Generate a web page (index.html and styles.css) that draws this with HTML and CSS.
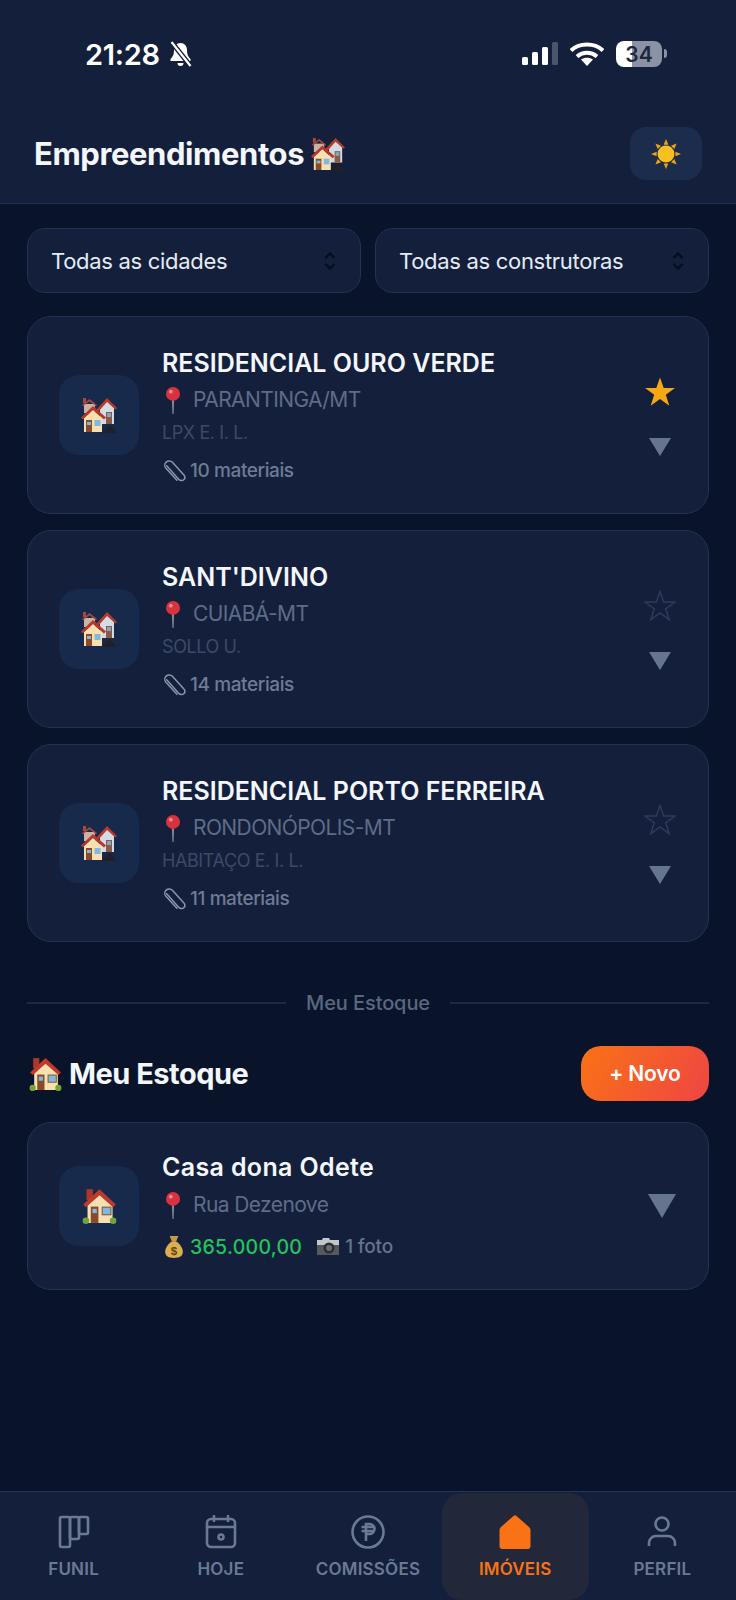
FILE: index.html
```html
<!DOCTYPE html>
<html lang="pt-BR">
<head>
    <meta charset="UTF-8">
    <title>Empreendimentos</title>
    <link rel="stylesheet" href="styles.css">
</head>
<body>
    <svg class="sprites" width="0" height="0">
        <symbol id="house" viewBox="0 0 32 34">
            <path d="M4 2h6v10H4z" fill="#a8382c"/>
            <path d="M16 6l12 11v16H5V17z" fill="#f6dfb0"/>
            <path d="M16 2l15 14-2.500 2.500L16 7.500 3.500 18.500 1 16z" fill="#c0392b"/>
            <path d="M8 18h7v15H8z" fill="#8a4a2a"/>
            <path d="M9.500 20h4v4h-4z" fill="#7fb9e0"/>
            <path d="M18 18h9v8h-9z" fill="#8b5a3c"/>
            <path d="M19 19h7v6h-7z" fill="#7fb9e0"/>
            <circle cx="3.500" cy="31" r="3" fill="#6fa53a"/>
            <circle cx="28.500" cy="31" r="3" fill="#6fa53a"/>
        </symbol>
        <symbol id="houses" viewBox="0 0 36 36">
            <path d="M3 7h11v9H3z" fill="#c9b3a8"/>
            <path d="M2 1h3v5H2z" fill="#a8483a"/>
            <path d="M1 8l7.500-6L16 8l-1 1.200-6.500-5-6.500 5z" fill="#a8483a"/>
            <path d="M19 10l7-6 7 7v16H19z" fill="#d5dbe3"/>
            <path d="M15 13 26 1l10 10-1.500 1.500L26 5 17 15z" fill="#b83a2c"/>
            <path d="M25 15h6v12h-6z" fill="#8a5a44"/>
            <path d="M26 16h4v4h-4z" fill="#7fa8c8"/>
            <path d="M20 36l9-8 7 8z" fill="#231f26"/>
            <path d="M12 13l9 8v14H3V21z" fill="#f6dfb0"/>
            <path d="M12 9l13 11.500-2 2L12 13 1.500 22.500 0 20.500z" fill="#b8362a"/>
            <path d="M5 23h6v12H5z" fill="#8a4a2a"/>
            <path d="M6 25h4v3H6z" fill="#7fb9e0"/>
            <path d="M13.500 23h6v6h-6z" fill="#7fb9e0"/>
        </symbol>
        <symbol id="pin" viewBox="0 0 20 32">
            <path d="M9 14h2l-.5 18h-1z" fill="#a9adb5"/>
            <circle cx="10" cy="9" r="8" fill="#d9323f"/>
            <circle cx="7.500" cy="6.500" r="2.200" fill="#f08a90"/>
        </symbol>
        <symbol id="clip" viewBox="0 0 24 24">
            <path d="M4.500 6.500 16 19.500c1.500 1.700 4 1.500 5 .3 1.200-1.200 1.200-3.100-.2-4.600L10 3.200C8.500 1.600 5.800 1.300 4 3c-1.800 1.700-1.700 4.200-.2 5.800l10.500 11.500" fill="none" stroke="#8b97ab" stroke-width="1.400" stroke-linecap="round"/>
        </symbol>
        <symbol id="camera" viewBox="0 0 24 19">
            <path d="M1 3h5l1-2h6l1 2h9v15H1z" fill="#55585d"/>
            <path d="M1 3h5l1-2h6l1 2h9v5H1z" fill="#c4c6c9"/>
            <circle cx="13" cy="11" r="5.500" fill="#2c2e33"/>
            <circle cx="13" cy="11" r="3" fill="#6a6e75"/>
        </symbol>
        <symbol id="star" viewBox="0 0 32 32">
            <path d="M16 1.500 19.700 12H31l-9.200 6.700 3.500 11L16 23l-9.300 6.700 3.500-11L1 12h11.300z"/>
        </symbol>
    </svg>

    <header class="topo">
        <div class="status">
            <div class="hora">
                <span>21:28</span>
                <svg class="sino" viewBox="0 0 24 26" width="25" height="26">
                    <path d="M12 2c-4 0-6.500 3-6.500 7 0 5-1.500 7-3.500 9v2h20v-2c-2-2-3.500-4-3.500-9 0-4-2.500-7-6.500-7z" fill="#fff"/>
                    <path d="M9 22a3 3 0 0 0 6 0z" fill="#fff"/>
                    <path d="M3 1l19 24" stroke="#131f3b" stroke-width="5"/>
                    <path d="M3 1l19 24" stroke="#fff" stroke-width="2.200"/>
                </svg>
            </div>
            <div class="sinais">
                <svg viewBox="0 0 36 24" width="36" height="24">
                    <rect x="0" y="15" width="6" height="8" rx="1.500" fill="#fff"/>
                    <rect x="10" y="10" width="6" height="13" rx="1.500" fill="#fff"/>
                    <rect x="20" y="5" width="6" height="18" rx="1.500" fill="#fff"/>
                    <rect x="30" y="0" width="6" height="23" rx="1.500" fill="#4a556b"/>
                </svg>
                <svg viewBox="0 0 34 24" width="34" height="24">
                    <path d="M1 8.500C9.500 .5 24.500 .5 33 8.500" fill="none" stroke="#fff" stroke-width="4"/>
                    <path d="M7 14.500c6-5 14-5 20 0" fill="none" stroke="#fff" stroke-width="4"/>
                    <path d="M17 24l-6-6.500c3.500-2.500 8.500-2.500 12 0z" fill="#fff"/>
                </svg>
                <div class="bateria"><span>34</span></div>
            </div>
        </div>
        <div class="barra">
            <h1>Empreendimentos <svg class="emoji" width="34" height="34"><use href="#houses"/></svg></h1>
            <button class="tema">
                <svg viewBox="0 0 32 32" width="30" height="30">
                    <g fill="#e8a21c">
                        <path d="M16 0l2.500 6h-5z"/><path d="M16 32l2.500-6h-5z"/><path d="M0 16l6-2.500v5z"/><path d="M32 16l-6-2.500v5z"/>
                        <path d="M4.700 4.700l6 2.400-3.600 3.600z"/><path d="M27.300 4.700l-6 2.400 3.600 3.600z"/><path d="M4.700 27.300l6-2.400-3.600-3.600z"/><path d="M27.300 27.300l-6-2.400 3.600-3.600z"/>
                    </g>
                    <circle cx="16" cy="16" r="9" fill="#fbbf24"/>
                </svg>
            </button>
        </div>
    </header>

    <main class="conteudo">
        <div class="filtros">
            <div class="filtro">
                <span>Todas as cidades</span>
                <svg viewBox="0 0 14 22" width="14" height="22"><path d="M2.500 8 7 3.500 11.500 8M2.500 14 7 18.500 11.500 14" fill="none" stroke="#070d1a" stroke-width="2.400"/></svg>
            </div>
            <div class="filtro">
                <span>Todas as construtoras</span>
                <svg viewBox="0 0 14 22" width="14" height="22"><path d="M2.500 8 7 3.500 11.500 8M2.500 14 7 18.500 11.500 14" fill="none" stroke="#070d1a" stroke-width="2.400"/></svg>
            </div>
        </div>

        <div class="lista">
            <article class="card">
                <div class="icone"><svg width="36" height="36"><use href="#houses"/></svg></div>
                <div class="info">
                    <h2>RESIDENCIAL OURO VERDE</h2>
                    <p class="local"><svg width="18" height="28"><use href="#pin"/></svg>PARANTINGA/MT</p>
                    <p class="construtora">LPX E. I. L.</p>
                    <p class="materiais"><svg width="25" height="25"><use href="#clip"/></svg>10 materiais</p>
                </div>
                <div class="acoes">
                    <svg class="estrela ativa" width="32" height="32"><use href="#star"/></svg>
                    <span class="seta"></span>
                </div>
            </article>

            <article class="card">
                <div class="icone"><svg width="36" height="36"><use href="#houses"/></svg></div>
                <div class="info">
                    <h2>SANT'DIVINO</h2>
                    <p class="local"><svg width="18" height="28"><use href="#pin"/></svg>CUIABÁ-MT</p>
                    <p class="construtora">SOLLO U.</p>
                    <p class="materiais"><svg width="25" height="25"><use href="#clip"/></svg>14 materiais</p>
                </div>
                <div class="acoes">
                    <svg class="estrela" width="32" height="32"><use href="#star"/></svg>
                    <span class="seta"></span>
                </div>
            </article>

            <article class="card">
                <div class="icone"><svg width="36" height="36"><use href="#houses"/></svg></div>
                <div class="info">
                    <h2>RESIDENCIAL PORTO FERREIRA</h2>
                    <p class="local"><svg width="18" height="28"><use href="#pin"/></svg>RONDONÓPOLIS-MT</p>
                    <p class="construtora">HABITAÇO E. I. L.</p>
                    <p class="materiais"><svg width="25" height="25"><use href="#clip"/></svg>11 materiais</p>
                </div>
                <div class="acoes">
                    <svg class="estrela" width="32" height="32"><use href="#star"/></svg>
                    <span class="seta"></span>
                </div>
            </article>
        </div>

        <div class="divisor"><span>Meu Estoque</span></div>

        <div class="estoque-topo">
            <h2><svg width="33" height="35"><use href="#house"/></svg>Meu Estoque</h2>
            <button class="novo">+ Novo</button>
        </div>

        <article class="card card-estoque">
            <div class="icone"><svg width="35" height="37"><use href="#house"/></svg></div>
            <div class="info">
                <h2>Casa dona Odete</h2>
                <p class="local"><svg width="18" height="28"><use href="#pin"/></svg>Rua Dezenove</p>
                <p class="valores">
                    <svg viewBox="0 0 20 26" width="18" height="23">
                        <path d="M5 1h10l-2.500 6h-5z" fill="#c99a3e"/>
                        <path d="M8 7h4c5 3 8 8 8 12 0 5-4 7-10 7S0 24 0 19c0-4 3-9 8-12z" fill="#dcae4e"/>
                        <text x="10" y="22.500" font-size="13" font-weight="700" text-anchor="middle" fill="#5e4413" font-family="Liberation Sans, sans-serif">$</text>
                    </svg>
                    <span class="preco">365.000,00</span>
                    <svg class="camera" width="24" height="19"><use href="#camera"/></svg><span>1 foto</span>
                </p>
            </div>
            <span class="seta seta-grande"></span>
        </article>
    </main>

    <nav class="menu">
        <a class="item">
            <svg viewBox="0 0 32 34" width="32" height="34" fill="none" stroke="currentColor" stroke-width="2.600" stroke-linejoin="round">
                <rect x="2" y="2" width="10" height="30" rx="1.500"/>
                <rect x="12" y="2" width="9" height="22" rx="1.500"/>
                <rect x="21" y="2" width="9" height="17" rx="1.500"/>
            </svg>
            <span>FUNIL</span>
        </a>
        <a class="item">
            <svg viewBox="0 0 32 34" width="32" height="34" fill="none" stroke="currentColor" stroke-width="2.600" stroke-linecap="round">
                <rect x="2" y="4" width="28" height="28" rx="4"/><path d="M2 12h28M9 1v5M23 1v5"/><circle cx="16" cy="22" r="2.500"/>
            </svg>
            <span>HOJE</span>
        </a>
        <a class="item">
            <svg viewBox="0 0 34 34" width="34" height="34" fill="none" stroke="currentColor" stroke-width="2.600">
                <circle cx="17" cy="17" r="15.500"/><path d="M15 26V9h3.500a5 5 0 0 1 0 10H15M10.500 12h13M10.500 16h13"/>
            </svg>
            <span>COMISSÕES</span>
        </a>
        <a class="item ativo">
            <svg viewBox="0 0 32 34" width="32" height="34">
                <path d="M14.500 1a2 2 0 0 1 3 0l12.500 11c1 1 1.500 2 1.500 3v16a3 3 0 0 1-3 3h-25a3 3 0 0 1-3-3V15c0-1 .5-2 1.500-3z" fill="currentColor"/>
            </svg>
            <span>IMÓVEIS</span>
        </a>
        <a class="item">
            <svg viewBox="0 0 32 34" width="32" height="34" fill="none" stroke="currentColor" stroke-width="2.600">
                <circle cx="16" cy="9" r="6.500"/><path d="M3 31v-3a7 7 0 0 1 7-7h12a7 7 0 0 1 7 7v3"/>
            </svg>
            <span>PERFIL</span>
        </a>
    </nav>
</body>
</html>
```

FILE: styles.css
```css
:root {
    --painel: #131f3b;
    --fundo: #09142a;
    --card: #141f3b;
    --borda: #223252;
    --icone: #172a4c;
    --laranja: #f97316;
}

* {
    box-sizing: border-box;
}

body {
    margin: 0;
    width: 736px;
    height: 1600px;
    display: flex;
    flex-direction: column;
    background: var(--fundo);
    font-family: 'Inter', sans-serif;
    color: #f3f6fb;
    overflow: hidden;
}

h1, h2, p {
    margin: 0;
}

.sprites {
    position: absolute;
}

/* topo */
.topo {
    height: 204px;
    padding-top: 38px;
    background: var(--painel);
    border-bottom: 1px solid #1f3150;
    flex-shrink: 0;
}

.status {
    display: flex;
    justify-content: space-between;
    align-items: center;
    height: 32px;
    padding: 0 74px 0 85px;
}

.hora {
    display: flex;
    align-items: center;
    gap: 8px;
    font-size: 29px;
    font-weight: 600;
    letter-spacing: -0.3px;
    color: #fff;
}

.sinais {
    display: flex;
    align-items: center;
    gap: 12px;
}

.bateria {
    width: 46px;
    height: 26px;
    border-radius: 8px;
    background: linear-gradient(90deg, #fff 35%, #8b92a3 35%);
    display: flex;
    align-items: center;
    justify-content: center;
    font-size: 21px;
    font-weight: 600;
    color: #1c2840;
    position: relative;
}

.bateria::after {
    content: '';
    position: absolute;
    right: -5px;
    top: 8px;
    width: 3px;
    height: 9px;
    border-radius: 0 3px 3px 0;
    background: #8b92a3;
}

.barra {
    display: flex;
    justify-content: space-between;
    align-items: center;
    padding: 0 34px;
    margin-top: 57px;
}

.barra h1 {
    display: flex;
    align-items: center;
    font-size: 31px;
    font-weight: 700;
    letter-spacing: -0.4px;
    white-space: pre;
}

.tema {
    width: 72px;
    height: 53px;
    border: none;
    border-radius: 16px;
    background: #1b2c4d;
    display: flex;
    align-items: center;
    justify-content: center;
    padding: 0;
}

/* conteudo */
.conteudo {
    flex: 1;
    padding: 24px 27px 0;
}

.filtros {
    display: grid;
    grid-template-columns: 1fr 1fr;
    gap: 14px;
}

.filtro {
    height: 65px;
    background: var(--painel);
    border: 1px solid var(--borda);
    border-radius: 18px;
    display: flex;
    align-items: center;
    justify-content: space-between;
    padding: 0 23px;
    font-size: 22px;
    letter-spacing: -0.3px;
    color: #e6ebf3;
}

.lista {
    display: flex;
    flex-direction: column;
    gap: 16.2px;
    margin-top: 23px;
}

.card {
    display: flex;
    align-items: center;
    background: var(--card);
    border: 1px solid var(--borda);
    border-radius: 24px;
    padding: 30px 32px 28px 31px;
}

.icone {
    width: 80px;
    height: 80px;
    flex-shrink: 0;
    border-radius: 20px;
    background: var(--icone);
    display: flex;
    align-items: center;
    justify-content: center;
    margin: 0 23px 2px 0;
}

.info {
    flex: 1;
}

.info h2 {
    font-size: 25px;
    line-height: 32px;
    font-weight: 600;
    letter-spacing: 0;
}

.local {
    display: flex;
    align-items: center;
    gap: 11px;
    margin-top: 6px;
    padding-left: 2px;
    font-size: 21px;
    line-height: 30px;
    letter-spacing: -0.6px;
    color: #5f6c88;
}

.construtora {
    margin-top: 6px;
    font-size: 18px;
    line-height: 24px;
    letter-spacing: -0.4px;
    color: #3d4a66;
}

.materiais {
    display: flex;
    align-items: center;
    gap: 3px;
    margin-top: 12px;
    font-size: 19px;
    line-height: 28px;
    font-weight: 500;
    letter-spacing: -0.4px;
    color: #6f7b95;
}

.acoes {
    display: flex;
    flex-direction: column;
    align-items: center;
    gap: 30px;
}

.estrela {
    fill: none;
    stroke: #2d3b5a;
    stroke-width: 1.5;
}

.estrela.ativa {
    fill: #f9a613;
    stroke: none;
}

.seta {
    display: block;
    width: 0;
    height: 0;
    border-left: 11px solid transparent;
    border-right: 11px solid transparent;
    border-top: 18px solid #66758f;
}

.seta-grande {
    border-left-width: 14px;
    border-right-width: 14px;
    border-top-width: 24px;
}

.divisor {
    display: flex;
    align-items: center;
    gap: 20px;
    margin-top: 46.6px;
    font-size: 20px;
    line-height: 28px;
    font-weight: 500;
    letter-spacing: -0.1px;
    color: #5a6780;
}

.divisor::before,
.divisor::after {
    content: '';
    flex: 1;
    height: 2px;
    background: #1c2a45;
}

.estoque-topo {
    display: flex;
    justify-content: space-between;
    align-items: center;
    margin-top: 29px;
}

.estoque-topo h2 {
    display: flex;
    align-items: center;
    gap: 7px;
    padding-left: 2px;
    font-size: 29px;
    font-weight: 700;
    letter-spacing: -0.5px;
}

.novo {
    width: 128px;
    height: 55px;
    border: none;
    border-radius: 20px;
    background: linear-gradient(120deg, var(--laranja), #ef4444);
    font-family: inherit;
    font-size: 21px;
    font-weight: 600;
    letter-spacing: -0.2px;
    color: #fff;
}

.card-estoque {
    margin-top: 21px;
    padding-top: 28px;
    padding-bottom: 28px;
}

.card-estoque .icone {
    margin-bottom: 0;
}

.card-estoque h2 {
    letter-spacing: 0.35px;
}

.card-estoque .local {
    margin-top: 7px;
}

.valores {
    display: flex;
    align-items: center;
    margin-top: 13px;
    padding-left: 3px;
    font-size: 19px;
    line-height: 28px;
    font-weight: 500;
    letter-spacing: -0.2px;
    color: #65738e;
}

.preco {
    margin-left: 7px;
    font-size: 19.5px;
    font-weight: 500;
    letter-spacing: 0.3px;
    color: #22c55e;
}

.camera {
    margin: 0 5px 0 14px;
}

/* menu */
.menu {
    height: 109px;
    flex-shrink: 0;
    display: grid;
    grid-template-columns: repeat(5, 1fr);
    background: var(--painel);
    border-top: 1px solid #22345a;
    padding-top: 1px;
}

.item {
    display: flex;
    flex-direction: column;
    align-items: center;
    gap: 10px;
    padding-top: 22px;
    font-size: 17px;
    font-weight: 600;
    letter-spacing: 0.2px;
    color: #6b7a94;
}

.item.ativo {
    background: #22273a;
    color: var(--laranja);
    border-radius: 20px;
}
```
